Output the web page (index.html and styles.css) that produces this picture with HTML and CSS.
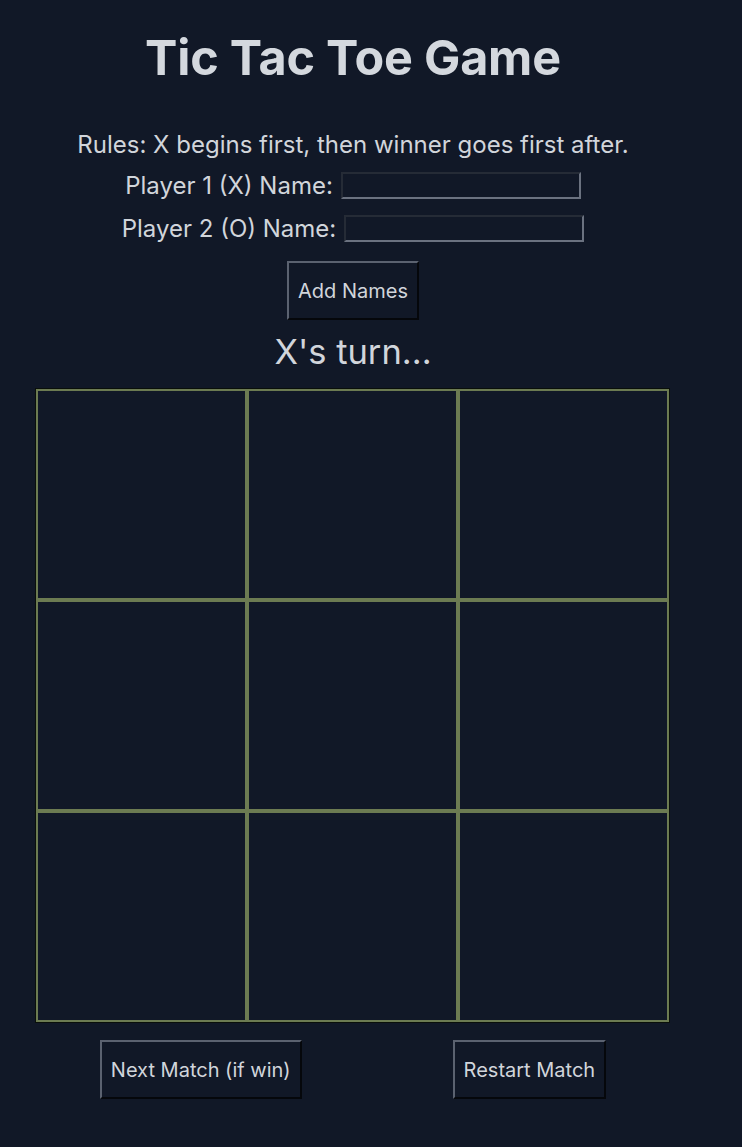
FILE: index.html
```html
<!DOCTYPE html>
<html lang="en">
<head>
<meta charset="utf-8">
<title>Tic Tac Toe Game</title>
<link rel="stylesheet" href="styles.css">
</head>
<body>
<main class="app">
  <h1 class="title">Tic Tac Toe Game</h1>
  <p class="rules">Rules: X begins first, then winner goes first after.</p>
  <div class="name-row">
    <label class="name-label" for="p1">Player 1 (X) Name:</label>
    <input class="name-input" id="p1" type="text">
  </div>
  <div class="name-row name-row-2">
    <label class="name-label" for="p2">Player 2 (O) Name:</label>
    <input class="name-input" id="p2" type="text">
  </div>
  <div class="add-wrap">
    <button class="btn" type="button">Add Names</button>
  </div>
  <p class="turn">X's turn...</p>
  <div class="board">
    <div class="cell"></div>
    <div class="cell"></div>
    <div class="cell"></div>
    <div class="cell"></div>
    <div class="cell"></div>
    <div class="cell"></div>
    <div class="cell"></div>
    <div class="cell"></div>
    <div class="cell"></div>
  </div>
  <div class="controls">
    <button class="btn" type="button">Next Match (if win)</button>
    <button class="btn" type="button">Restart Match</button>
  </div>
</main>
</body>
</html>
```
FILE: styles.css
```css
html, body {
  margin: 0;
  padding: 0;
  background: #111827;
}
body {
  font-family: Inter, "Noto Sans", sans-serif;
  color: #d1d5db;
  min-height: 1147px;
}
.app {
  width: 706px;
  display: flex;
  flex-direction: column;
  align-items: center;
}
.title {
  margin: 30px 0 0;
  font-size: 48.5px;
  line-height: 56px;
  font-weight: 700;
  color: #d4d8de;
  letter-spacing: -0.2px;
}
.rules {
  margin: 44px 0 0;
  font-size: 24px;
  line-height: 30px;
}
.name-row {
  height: 43px;
  display: flex;
  align-items: center;
  gap: 8px;
  font-size: 24px;
  margin-top: 4px;
}
.name-row-2 {
  margin-top: 0;
}
.name-input {
  width: 236px;
  height: 23px;
  padding: 0;
  margin: 0;
  background: transparent;
  border: 2px solid;
  border-color: #252b36 #6b7280 #6b7280 #252b36;
  color: #d1d5db;
}
.add-wrap {
  margin-top: 11px;
}
.btn {
  font-family: Inter, "Noto Sans", sans-serif;
  font-size: 20px;
  color: #d1d5db;
  background: #111827;
  border: 2px solid;
  border-color: #5b6270 #05070b #05070b #5b6270;
  height: 59px;
  padding: 0 9px;
  margin: 0;
}
.turn {
  margin: 12px 0 0;
  font-size: 34.5px;
  line-height: 40px;
}
.board {
  margin-top: 16px;
  align-self: flex-start;
  margin-left: 35px;
  width: 633px;
  border: 1px solid #0a0f0a;
  display: grid;
  grid-template-columns: repeat(3, 1fr);
  grid-template-rows: repeat(3, 211px);
}
.cell {
  border: 2px solid #6c7b52;
  background: #111827;
}
.controls {
  margin-top: 17px;
  display: flex;
  gap: 151px;
  justify-content: center;
}
```
